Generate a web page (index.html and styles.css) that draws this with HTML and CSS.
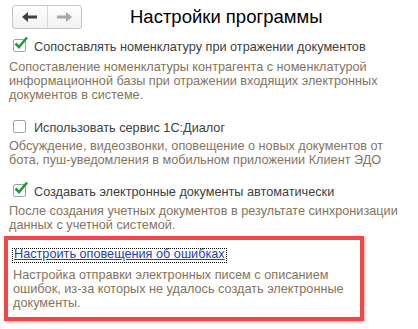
FILE: index.html
```html
<!DOCTYPE html>
<html lang="ru">
<head>
<meta charset="utf-8">
<link rel="stylesheet" href="styles.css">
</head>
<body>
<div class="page">
  <div class="header">
    <div class="nav">
      <div class="nav-btn">
        <svg width="16" height="10" viewBox="0 0 16 10"><path d="M0 5 L6 0 L6 3.5 L15 3.5 L15 6.5 L6 6.5 L6 10 Z" fill="#404040"/></svg>
      </div>
      <div class="nav-btn">
        <svg width="16" height="10" viewBox="0 0 16 10"><path d="M16 5 L10 0 L10 3.5 L1 3.5 L1 6.5 L10 6.5 L10 10 Z" fill="#a8a8a8"/></svg>
      </div>
    </div>
    <div class="title">Настройки программы</div>
  </div>

  <div class="opt opt-first">
    <span class="cb checked"><svg width="16" height="14" viewBox="0 0 16 14"><path d="M2.5 7.5 L6 11 L14 1.5" fill="none" stroke="#1d9d3c" stroke-width="2.6"/></svg></span>
    <span class="label">Сопоставлять номенклатуру при отражении документов</span>
  </div>
  <div class="desc desc-a">Сопоставление номенклатуры контрагента с номенклатурой информационной базы при отражении входящих электронных документов в системе.</div>

  <div class="opt opt-b">
    <span class="cb"></span>
    <span class="label">Использовать сервис 1С:Диалог</span>
  </div>
  <div class="desc desc-b">Обсуждение, видеозвонки, оповещение о новых документов от бота, пуш-уведомления в мобильном приложении Клиент ЭДО</div>

  <div class="opt opt-c">
    <span class="cb checked"><svg width="16" height="14" viewBox="0 0 16 14"><path d="M2.5 7.5 L6 11 L14 1.5" fill="none" stroke="#1d9d3c" stroke-width="2.6"/></svg></span>
    <span class="label">Создавать электронные документы автоматически</span>
  </div>
  <div class="desc desc-c">После создания учетных документов в результате синхронизации данных с учетной системой.</div>

  <div class="highlight">
    <div class="link-row"><a class="link" href="#">Настроить оповещения об ошибках</a></div>
    <div class="desc inner">Настройка отправки электронных писем с описанием ошибок, из-за которых не удалось создать электронные документы.</div>
  </div>
</div>
</body>
</html>
```

FILE: styles.css
```css
html, body {
  margin: 0;
  padding: 0;
  background: #ffffff;
}
body {
  font-family: Arial, "Liberation Sans", sans-serif;
  font-size: 12.7px;
  color: #404040;
}
.page {
  width: 418px;
  height: 329px;
  overflow: hidden;
}
.header {
  display: flex;
  align-items: center;
  padding: 5px 0 0 12px;
  height: 24px;
}
.nav {
  display: flex;
  width: 70px;
  height: 24px;
  box-sizing: border-box;
  border: 1px solid #c6c6c6;
  border-radius: 3px;
  background: linear-gradient(#ffffff, #f1f1f1);
}
.nav-btn {
  flex: 1;
  display: flex;
  align-items: center;
  justify-content: center;
}
.nav-btn + .nav-btn {
  border-left: 1px solid #d8d8d8;
}
.title {
  margin-left: 48px;
  font-size: 18.5px;
  color: #000;
  line-height: 24px;
}
.opt {
  display: flex;
  align-items: center;
  margin: 15px 0 0 13px;
  height: 16px;
}
.opt-first { margin-top: 8px; }
.opt-b { margin-top: 16px; }
.opt-c { margin-top: 15px; }
.cb {
  position: relative;
  width: 13px;
  height: 13px;
  box-sizing: border-box;
  border: 1px solid #a4a4a4;
  border-radius: 2px;
  background: #fff;
  margin-right: 8px;
  flex: none;
}
.cb svg {
  position: absolute;
  left: -1px;
  top: -4px;
}
.label {
  color: #404040;
  line-height: 16px;
  padding-top: 3px;
}
.desc {
  color: #85745e;
  line-height: 14px;
  margin: 6px 10px 0 9px;
}
.desc-a { margin-top: 7px; }
.desc-b { margin-top: 5px; }
.desc-c { margin-top: 6px; }
.highlight {
  margin: 4px 0 0 4px;
  width: 360px;
  box-sizing: border-box;
  border: 4px solid #f04848;
  box-shadow: 1px 1px 3px rgba(0,0,0,0.3);
  padding: 9px 2px 7px 5px;
}
.link-row {
  display: flex;
}
.link {
  color: #1c3fc0;
  text-decoration: underline;
  outline: 1px dotted #000;
  line-height: 10px;
  padding: 0 1px 3px 1px;
}
.desc.inner {
  margin: 6px 0 0 0;
}
```
